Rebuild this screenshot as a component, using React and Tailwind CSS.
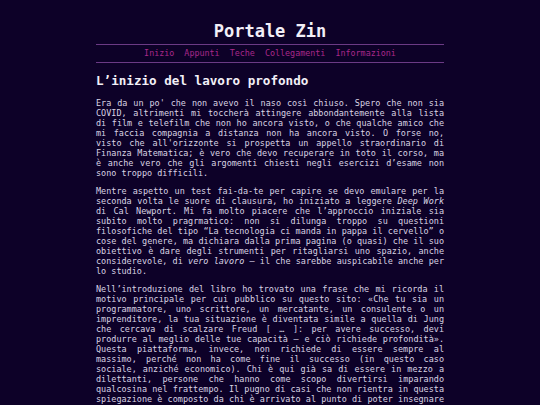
import React from 'react';

const links = ['Inizio', 'Appunti', 'Teche', 'Collegamenti', 'Informazioni'];

const App = () => {
  return (
    <div className="min-h-[405px] bg-[#0d0128] text-[#d9d3e3] font-['DejaVu_Sans_Mono',monospace]">
      <div className="mx-auto w-[348px] pt-[20px]">
        <h1 className="text-center text-[17px] leading-[22px] font-bold text-[#f2eff7]">Portale Zin</h1>

        {/* menu */}
        <nav className="mt-[2px] border-y border-[#6b3a85] h-[19px] flex items-center justify-center gap-[10px] text-[8.4px] text-[#a8288a]">
          {links.map(link => (
            <a key={link} href="#">{link}</a>
          ))}
        </nav>

        <h2 className="mt-[10px] text-[12.6px] leading-[16px] font-bold text-[#f2eff7]">L’inizio del lavoro profondo</h2>

        <div className="mt-[9px] text-[8.47px] leading-[10px] text-justify">
          <p>
            Era da un po' che non avevo il naso così chiuso. Spero che non sia COVID, altrimenti mi toccherà attingere abbondantemente alla lista di film e telefilm che non ho ancora visto, o che qualche amico che mi faccia compagnia a distanza non ha ancora visto. O forse no, visto che all'orizzonte si prospetta un appello straordinario di Finanza Matematica; è vero che devo recuperare in toto il corso, ma è anche vero che gli argomenti chiesti negli esercizi d’esame non sono troppo difficili.
          </p>
          <p className="mt-[8px]">
            Mentre aspetto un test fai-da-te per capire se devo emulare per la seconda volta le suore di clausura, ho iniziato a leggere <em>Deep Work</em> di Cal Newport. Mi fa molto piacere che l’approccio iniziale sia subito molto pragrmatico: non si dilunga troppo su questioni filosofiche del tipo “La tecnologia ci manda in pappa il cervello” o cose del genere, ma dichiara dalla prima pagina (o quasi) che il suo obiettivo è dare degli strumenti per ritagliarsi uno spazio, anche considerevole, di <em>vero lavoro</em> — il che sarebbe auspicabile anche per lo studio.
          </p>
          <p className="mt-[8px]">
            Nell’introduzione del libro ho trovato una frase che mi ricorda il motivo principale per cui pubblico su questo sito: «Che tu sia un programmatore, uno scrittore, un mercatante, un consulente o un imprenditore, la tua situazione è diventata simile a quella di Jung che cercava di scalzare Freud [ … ]: per avere successo, devi produrre al meglio delle tue capacità — e ciò richiede profondità». Questa piattaforma, invece, non richiede di essere sempre al massimo, perché non ha come fine il successo (in questo caso sociale, anziché economico). Chi è qui già sa di essere in mezzo a dilettanti, persone che hanno come scopo divertirsi imparando qualcosina nel frattempo. Il pugno di casi che non rientra in questa spiegazione è composto da chi è arrivato al punto di poter insegnare qualcosa agli altri, e lo fa per il piacere di condividere.
          </p>
        </div>
      </div>
    </div>
  );
};

export default App;
